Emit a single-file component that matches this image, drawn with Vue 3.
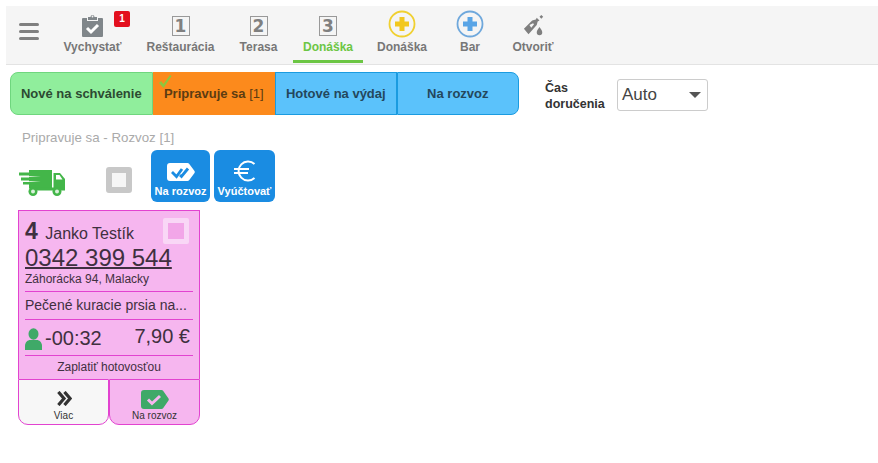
<script setup>
const nav = [
  { label: 'Vychystať', w: 89, icon: 'clip' },
  { label: 'Reštaurácia', w: 87, icon: 'n', n: '1' },
  { label: 'Terasa', w: 69, icon: 'n', n: '2' },
  { label: 'Donáška', w: 70, icon: 'n', n: '3', active: true },
  { label: 'Donáška', w: 78, icon: 'plus', c: '#f0d030', p: '#f2c81e' },
  { label: 'Bar', w: 58, icon: 'plus', c: '#6fa8dc', p: '#5aa5e6' },
  { label: 'Otvoriť', w: 68, icon: 'bottle' }
]
const tabs = [
  { label: 'Nové na schválenie', cls: 'green' },
  { label: 'Pripravuje sa', count: ' [1]', cls: 'orange', check: true },
  { label: 'Hotové na výdaj', cls: 'blue' },
  { label: 'Na rozvoz', cls: 'blue last' }
]
</script>

<template>
  <div class="page">
    <header class="top">
      <div class="burger"><i></i><i></i><i></i></div>
      <nav class="nav">
        <div v-for="(n, i) in nav" :key="i" class="item" :class="{ active: n.active }" :style="{ width: n.w + 'px' }">
          <div class="icon">
            <template v-if="n.icon === 'clip'">
              <svg class="clip" width="21" height="23" viewBox="0 0 21 23">
                <path fill="#80868a" d="M1 4h4v3h11V4h4a1 1 0 0 1 1 1v17a1 1 0 0 1-1 1H1a1 1 0 0 1-1-1V5a1 1 0 0 1 1-1z"/>
                <path fill="#80868a" d="M6 3h2.500a2 2 0 0 1 4 0H15v3H6z"/>
                <circle cx="10.500" cy="2.500" r="0.900" fill="#f5f5f5"/>
                <path fill="none" stroke="#fff" stroke-width="3" d="M5 14l4 4 7-7"/>
              </svg>
              <span class="badge">1</span>
            </template>
            <span v-else-if="n.icon === 'n'" class="num">{{ n.n }}</span>
            <svg v-else-if="n.icon === 'plus'" width="28" height="28" viewBox="0 0 28 28">
              <circle cx="14" cy="14" r="12.500" fill="#f5f5f5" :stroke="n.c" stroke-width="1.800"/>
              <path :fill="n.p" d="M11.500 7h5v4.500H21v5h-4.500V21h-5v-4.500H7v-5h4.500z"/>
            </svg>
            <svg v-else class="bottle" width="22" height="22" viewBox="0 0 24 24">
              <path fill="#7f7f7f" d="M1 15l9-9 4-1 1-2 3 3-2 1-1 4-9 10z"/>
              <path fill="#f5f5f5" d="M7 11l4-2 1 1-3 4z"/>
              <path fill="#7f7f7f" d="M20 0l2 2-2 2-2-2zM18 13c2 3 3 4 3 6a3 3 0 0 1-6 0c0-2 1-3 3-6z"/>
            </svg>
          </div>
          <span class="lab">{{ n.label }}</span>
        </div>
      </nav>
    </header>

    <section class="filters">
      <div class="tabs">
        <div v-for="t in tabs" :key="t.label" class="tab" :class="t.cls">
          <svg v-if="t.check" class="chk" width="13" height="13" viewBox="0 0 13 13">
            <path fill="#8cc63f" d="M0 8l2-2 2.500 3L11 0l1.600 1L4.500 13z"/>
          </svg>
          {{ t.label }}<span class="cnt">{{ t.count }}</span>
        </div>
      </div>
      <label class="time">Čas<br>doručenia</label>
      <div class="select"><span>Auto</span><i></i></div>
    </section>

    <h2 class="title">Pripravuje sa - Rozvoz [1]</h2>

    <div class="actions">
      <svg class="truck" width="46" height="27" viewBox="0 0 46 27">
        <g fill="#43b649">
          <path d="M10 1h23v18.500H10z"/>
          <path d="M0 3.500h12v3H0zM2 8.500h10v3H2zM4 13h8v2.500H4z"/>
          <path d="M34.500 4H41l5 6v10.500H34.500z"/>
          <path d="M11 18.500h35v3H11z"/>
          <circle cx="14" cy="22.500" r="4.500"/><circle cx="38" cy="22.500" r="4.500"/>
        </g>
        <path fill="#fff" d="M0 7.200h11l11 .4-11 .4H0zM2 12h10l10 .4-10 .4H2z"/>
        <path fill="#fff" d="M37 6h3.500l3 4.500H37z"/>
        <circle cx="14" cy="22.500" r="2" fill="#d9f0da"/><circle cx="38" cy="22.500" r="2" fill="#d9f0da"/>
      </svg>
      <div class="box"></div>
      <button class="btn one">
        <svg width="28" height="18" viewBox="0 0 28 18">
          <path fill="#fff" d="M3 0h17.500a2 2 0 0 1 1.600.800L27.500 8a2 2 0 0 1 0 2l-5.400 7.200a2 2 0 0 1-1.600.800H3a3 3 0 0 1-3-3V3a3 3 0 0 1 3-3z"/>
          <path fill="none" stroke="#1a8ce2" stroke-width="2.800" d="M5 9l4.500 4.500L15 6"/>
          <path fill="none" stroke="#1a8ce2" stroke-width="2.800" d="M13 12l1.500 1.500L21 5.500"/>
        </svg>
        <span>Na rozvoz</span>
      </button>
      <button class="btn two">
        <svg width="22" height="22" viewBox="0 0 22 22">
          <path fill="none" stroke="#fff" stroke-width="2" d="M20.500 4A9.500 9.500 0 1 0 20.500 18"/>
          <path fill="none" stroke="#fff" stroke-width="2" d="M0 9h15M0 13h14"/>
        </svg>
        <span>Vyúčtovať</span>
      </button>
    </div>

    <article class="card">
      <div class="body">
        <div class="cb"></div>
        <div class="name"><b>4</b> Janko Testík</div>
        <div class="phone">0342 399 544</div>
        <div class="addr">Záhorácka 94, Malacky</div>
        <div class="food">Pečené kuracie prsia na...</div>
        <div class="meta">
          <svg width="17" height="22" viewBox="0 0 17 22">
            <ellipse cx="8.500" cy="6" rx="5" ry="5.800" fill="#3fa968"/>
            <path fill="#3fa968" d="M0 22v-4c0-4 3-6 5-6h7c2 0 5 2 5 6v4z"/>
          </svg>
          <span class="eta">-00:32</span>
          <span class="price">7,90 €</span>
        </div>
        <div class="pay">Zaplatiť hotovosťou</div>
      </div>
      <div class="foot">
        <div class="cell more">
          <svg width="16" height="15" viewBox="0 0 16 16">
            <path fill="none" stroke="#333" stroke-width="3.400" d="M2 1l6 7-6 7M8.500 1l6 7-6 7"/>
          </svg>
          <span>Viac</span>
        </div>
        <div class="cell go">
          <svg width="28" height="19" viewBox="0 0 28 19">
            <path fill="#3fa968" d="M3 0h17.500a2 2 0 0 1 1.600.800L27.500 8.500a2 2 0 0 1 0 2l-5.400 7.700a2 2 0 0 1-1.600.800H3a3 3 0 0 1-3-3V3a3 3 0 0 1 3-3z"/>
            <path fill="none" stroke="#f6b6ef" stroke-width="3" d="M7 9.500l4 4L19 6"/>
          </svg>
          <span>Na rozvoz</span>
        </div>
      </div>
    </article>
  </div>
</template>

<style scoped>
.page {
  width: 878px;
  height: 463px;
  padding-top: 6px;
  box-sizing: border-box;
  font-family: "Liberation Sans", Arial, sans-serif;
  color: #333;
  background: #fff;
  overflow: hidden;
}
.top {
  margin-left: 6px;
  height: 59px;
  box-sizing: border-box;
  background: #f5f5f5;
  border-bottom: 1px solid #e3e3e3;
  display: flex;
}
.burger {
  width: 20px;
  margin: 17px 0 0 13px;
  display: flex;
  flex-direction: column;
  gap: 4px;
}
.burger i { display: block; height: 3px; background: #7f7f7f; border-radius: 2px; }
.nav { display: flex; margin-left: 9px; }
.item {
  position: relative;
  display: flex;
  flex-direction: column;
  align-items: center;
  height: 57px;
  box-sizing: border-box;
}
.item.active { border-bottom: 3px solid #6cc644; }
.item.active .lab { color: #6cc644; }
.icon {
  position: relative;
  height: 32px;
  margin-top: 2px;
  display: flex;
  align-items: center;
  justify-content: center;
}
.clip { margin-top: 3px; }
.bottle { margin-top: 3px; margin-left: 2px; }
.lab { font-size: 12px; font-weight: bold; color: #777; white-space: nowrap; }
.badge {
  position: absolute;
  left: 32px;
  top: 3px;
  width: 16px;
  height: 16px;
  background: #e3101e;
  border-radius: 2px;
  color: #fff;
  font-size: 10px;
  font-weight: bold;
  line-height: 15px;
  text-align: center;
}
.num {
  box-sizing: border-box;
  width: 18px;
  height: 20px;
  margin-top: 3px;
  border: 1px solid #999;
  color: #808080;
  font-size: 17px;
  font-weight: bold;
  line-height: 18px;
  text-align: center;
  font-family: "DejaVu Sans", sans-serif;
}
.filters {
  margin: 7px 0 0 10px;
  display: flex;
  align-items: flex-start;
}
.tabs { display: flex; width: 509px; height: 43px; }
.tab {
  position: relative;
  box-sizing: border-box;
  height: 43px;
  width: 122px;
  padding-right: 4px;
  display: flex;
  align-items: center;
  justify-content: center;
  white-space: pre;
  font-size: 13px;
  font-weight: bold;
  border: 1px solid;
}
.green { width: 143px; background: #90ee9c; border-color: #6fd67e; border-radius: 8px 0 0 8px; color: #2c4a32; }
.orange { background: #fc8a1c; border-color: #fc8a1c; color: #5c3c12; }
.blue { background: #5bc2fb; border-color: #1a9be0; color: #24475c; }
.last { border-radius: 0 8px 8px 0; }
.cnt { font-weight: normal; }
.chk { position: absolute; left: 5px; top: 2px; }
.time { margin: 8px 0 0 26px; width: 72px; font-size: 12.500px; font-weight: bold; line-height: 16px; color: #333; }
.select {
  box-sizing: border-box;
  margin-top: 7px;
  width: 91px;
  height: 32px;
  background: #fff;
  border: 1px solid #ccc;
  border-radius: 3px;
  display: flex;
  align-items: center;
  justify-content: space-between;
  padding: 0 5px 0 4px;
  font-size: 17px;
  color: #444;
}
.select i { width: 0; height: 0; margin-right: 1px; border: 6px solid transparent; border-top: 6px solid #555; border-bottom: 0; }
.title { margin: 15px 0 0 22px; font-size: 13.300px; font-weight: normal; line-height: 16px; color: #aaa; }
.actions { display: flex; align-items: flex-start; margin: 4px 0 0 19px; height: 52px; }
.truck { margin-top: 19px; }
.box {
  box-sizing: border-box;
  width: 26px;
  height: 26px;
  margin: 17px 0 0 41px;
  border: 6px solid #c8c8c8;
  border-radius: 3px;
  background: #f6f6f6;
}
.btn {
  border: 0;
  padding: 0;
  height: 52px;
  background: #1a8ce2;
  border-radius: 6px;
  color: #fff;
  font-family: inherit;
  font-size: 11px;
  font-weight: bold;
  display: flex;
  flex-direction: column;
  align-items: center;
  white-space: nowrap;
}
.one { width: 59px; margin-left: 19px; }
.one svg { margin-top: 13px; }
.one span { margin-top: 4px; }
.two { width: 61px; margin-left: 4px; }
.two svg { margin-top: 10px; }
.two span { margin-top: 3px; }
.card { margin: 8px 0 0 18px; width: 182px; }
.body {
  position: relative;
  box-sizing: border-box;
  height: 169px;
  padding: 8px 6px 0;
  background: #f6b6ef;
  border: 1px solid #e243d0;
  border-bottom: 0;
  color: #3f3040;
}
.cb {
  position: absolute;
  right: 10px;
  top: 7px;
  box-sizing: border-box;
  width: 26px;
  height: 26px;
  border: 5px solid #f9d7f6;
  border-radius: 2px;
  background: #f2a6e8;
}
.name { font-size: 16px; line-height: 24px; height: 25px; }
.name b { font-size: 23px; margin-right: 3px; }
.phone { font-size: 24px; line-height: 27px; text-decoration: underline; text-decoration-thickness: 2px; white-space: nowrap; }
.addr { font-size: 12px; line-height: 16px; padding-bottom: 4px; border-bottom: 1px solid #e243d0; }
.food { font-size: 14px; line-height: 27px; border-bottom: 1px solid #e243d0; white-space: nowrap; }
.meta { display: flex; align-items: flex-end; height: 35px; border-bottom: 1px solid #e243d0; }
.meta svg { margin-bottom: 5px; }
.eta { font-size: 20px; line-height: 28px; margin: 0 0 3px 3px; }
.price { font-size: 20px; line-height: 28px; margin: 0 3px 5px auto; }
.pay { font-size: 12px; line-height: 23px; text-align: center; }
.foot { display: flex; height: 46px; }
.cell {
  box-sizing: border-box;
  flex: 1;
  display: flex;
  flex-direction: column;
  align-items: center;
  border: 1px solid #e243d0;
  border-radius: 0 0 10px 10px;
  font-size: 10px;
  color: #333;
}
.more { background: #f7f7f7; padding-top: 11px; }
.more span { margin-top: 4px; }
.go { background: #f6b6ef; padding-top: 10px; }
.go span { margin-top: 1px; }
</style>
